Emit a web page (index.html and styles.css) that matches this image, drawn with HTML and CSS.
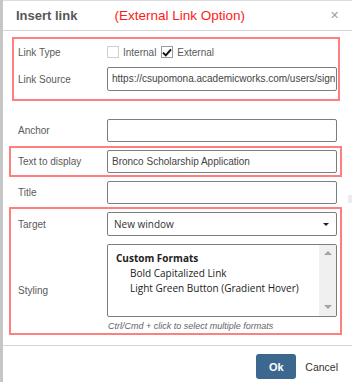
FILE: index.html
```html
<!DOCTYPE html>
<html lang="en">
  <head>
    <meta charset="UTF-8" />
    <title>Insert link</title>
    <link rel="stylesheet" href="styles.css">
  </head>
  <body>
    <div class="il-dialog">
      <div class="il-header">
        <span class="il-title">Insert link</span>
        <span class="il-note">(External Link Option)</span>
        <span class="il-close">&#x2715;</span>
      </div>

      <div class="il-content">
        <div class="il-mark il-mark-a">
          <div class="il-row il-row-type">
            <label>Link Type</label>
            <div class="il-checks">
              <span class="il-check"></span>
              <span class="il-check-text">Internal</span>
              <span class="il-check il-checked">
                <svg width="10" height="9" viewBox="0 0 10 9"><path d="M1 4.6 L3.8 7.4 L9 1.4" fill="none" stroke="#111" stroke-width="2"/></svg>
              </span>
              <span class="il-check-text">External</span>
            </div>
          </div>
          <div class="il-row il-row-src">
            <label>Link Source</label>
            <div class="il-input il-input-src">https://csupomona.academicworks.com/users/sign</div>
          </div>
        </div>

        <div class="il-row il-row-anchor">
          <label>Anchor</label>
          <div class="il-input"></div>
        </div>

        <div class="il-mark il-mark-b">
          <div class="il-row">
            <label>Text to display</label>
            <div class="il-input">Bronco Scholarship Application</div>
          </div>
        </div>

        <div class="il-row il-row-title">
          <label>Title</label>
          <div class="il-input"></div>
        </div>

        <div class="il-mark il-mark-c">
          <div class="il-row il-row-target">
            <label>Target</label>
            <div class="il-select">
              <span>New window</span>
              <span class="il-caret"></span>
            </div>
          </div>
          <div class="il-row il-row-style">
            <label>Styling</label>
            <div class="il-list">
              <div class="il-list-items">
                <div class="il-group">Custom Formats</div>
                <div class="il-opt">Bold Capitalized Link</div>
                <div class="il-opt">Light Green Button (Gradient Hover)</div>
              </div>
              <div class="il-scroll">
                <span class="il-up"></span>
                <span class="il-down"></span>
              </div>
            </div>
          </div>
          <div class="il-hint">Ctrl/Cmd + click to select multiple formats</div>
        </div>
      </div>

      <div class="il-footer">
        <button class="il-ok">Ok</button>
        <span class="il-cancel">Cancel</span>
      </div>
    </div>
    <div class="il-pagebar"></div>
  </body>
</html>
```
FILE: styles.css
```css
body {
  margin: 0;
  background: #c6c6c6;
  font-family: "Liberation Sans", Arial, sans-serif;
  height: 382px;
  overflow: hidden;
  position: relative;
}
.il-dialog {
  margin-left: 3px;
  height: 382px;
  background: #fff;
  border-top: 1px solid #dcdcdc;
  box-sizing: border-box;
}
.il-header {
  height: 29px;
  border-bottom: 1px solid #d4d4d4;
  display: flex;
  align-items: center;
  padding-left: 13px;
  position: relative;
}
.il-title {
  font-size: 13px;
  font-weight: bold;
  color: #575757;
}
.il-note {
  margin-left: 37px;
  font-size: 13.5px;
  color: #ff1a1a;
}
.il-close {
  position: absolute;
  right: 13px;
  top: 8px;
  font-size: 11px;
  color: #a0a0a0;
}

.il-content {
  padding: 0 15px;
}
.il-row {
  display: grid;
  grid-template-columns: 89px 1fr;
  align-items: center;
}
.il-row label {
  font-size: 10px;
  color: #5a5a5a;
}
.il-input {
  height: 23px;
  box-sizing: border-box;
  border: 1px solid #7d7d7d;
  border-radius: 2px;
  font-size: 10px;
  color: #444;
  padding: 0 4px;
  line-height: 21px;
  white-space: nowrap;
  overflow: hidden;
}

/* red annotation boxes */
.il-mark {
  border: 2px solid #ff7e7e;
}
.il-mark-a {
  margin: 6px -3px 0 -6px;
  padding: 0 1px 8px 4px;
}
.il-mark-b {
  margin: 4px -5px 0 -9px;
  padding: 2px 3px 2px 7px;
}
.il-mark-c {
  margin: 3px -5px 0 -9px;
  padding: 3px 3px 0 7px;
}

.il-row-type {
  height: 24px;
  margin-top: 1px;
}
.il-checks {
  display: flex;
  align-items: center;
  font-size: 10px;
  color: #5a5a5a;
}
.il-check {
  width: 12px;
  height: 12px;
  box-sizing: border-box;
  border: 1px solid #cfcfcf;
  display: flex;
  align-items: center;
  justify-content: center;
}
.il-checked {
  border-color: #9a9a9a;
  margin-left: 5px;
}
.il-check-text {
  margin-left: 4px;
}
.il-row-src {
  margin-top: 3px;
}
.il-input-src {
  height: 24px;
  line-height: 22px;
}
.il-row-anchor {
  margin-top: 18px;
}
.il-row-title {
  margin-top: 4px;
}

.il-select {
  height: 24px;
  box-sizing: border-box;
  border: 1px solid #7d7d7d;
  border-radius: 2px;
  display: flex;
  align-items: center;
  justify-content: space-between;
  padding: 0 7px 0 6px;
  font-family: "Open Sans", sans-serif;
  font-size: 10px;
  color: #333;
}
.il-caret {
  border-left: 3px solid transparent;
  border-right: 3px solid transparent;
  border-top: 3px solid #222;
}
.il-row-style {
  margin-top: 8px;
}
.il-row-style label {
  align-self: end;
  padding-bottom: 21px;
}
.il-list {
  height: 73px;
  box-sizing: border-box;
  border: 1px solid #7d7d7d;
  border-radius: 2px;
  display: flex;
  font-family: "Open Sans", sans-serif;
  font-size: 10px;
  color: #222;
  overflow: hidden;
}
.il-list-items {
  flex: 1;
  padding: 6px 0 0 8px;
  line-height: 15px;
}
.il-group {
  font-weight: bold;
}
.il-opt {
  padding-left: 14px;
}
.il-scroll {
  width: 17px;
  background: #f0f0f0;
  display: flex;
  flex-direction: column;
  justify-content: space-between;
  align-items: center;
  padding: 6px 0 7px;
}
.il-up {
  border-left: 4px solid transparent;
  border-right: 4px solid transparent;
  border-bottom: 4px solid #a3a3a3;
}
.il-down {
  border-left: 4px solid transparent;
  border-right: 4px solid transparent;
  border-top: 4px solid #a3a3a3;
}
.il-hint {
  margin: 2px 0 0 90px;
  font-size: 9px;
  font-style: italic;
  color: #666;
  line-height: 14px;
}

.il-footer {
  margin-top: 10px;
  border-top: 1px solid #d4d4d4;
  padding: 8px 14px 0 0;
  display: flex;
  justify-content: flex-end;
  align-items: center;
}
.il-ok {
  width: 40px;
  height: 25px;
  border: 0;
  border-radius: 3px;
  background: #3c6890;
  color: #fff;
  font-family: "Liberation Sans", Arial, sans-serif;
  font-weight: bold;
  font-size: 11px;
}
.il-cancel {
  margin-left: 9px;
  font-size: 10.5px;
  color: #333;
}
.il-pagebar {
  position: absolute;
  right: 0;
  top: 195px;
  width: 4px;
  height: 8px;
  background: #ececec;
}
```
